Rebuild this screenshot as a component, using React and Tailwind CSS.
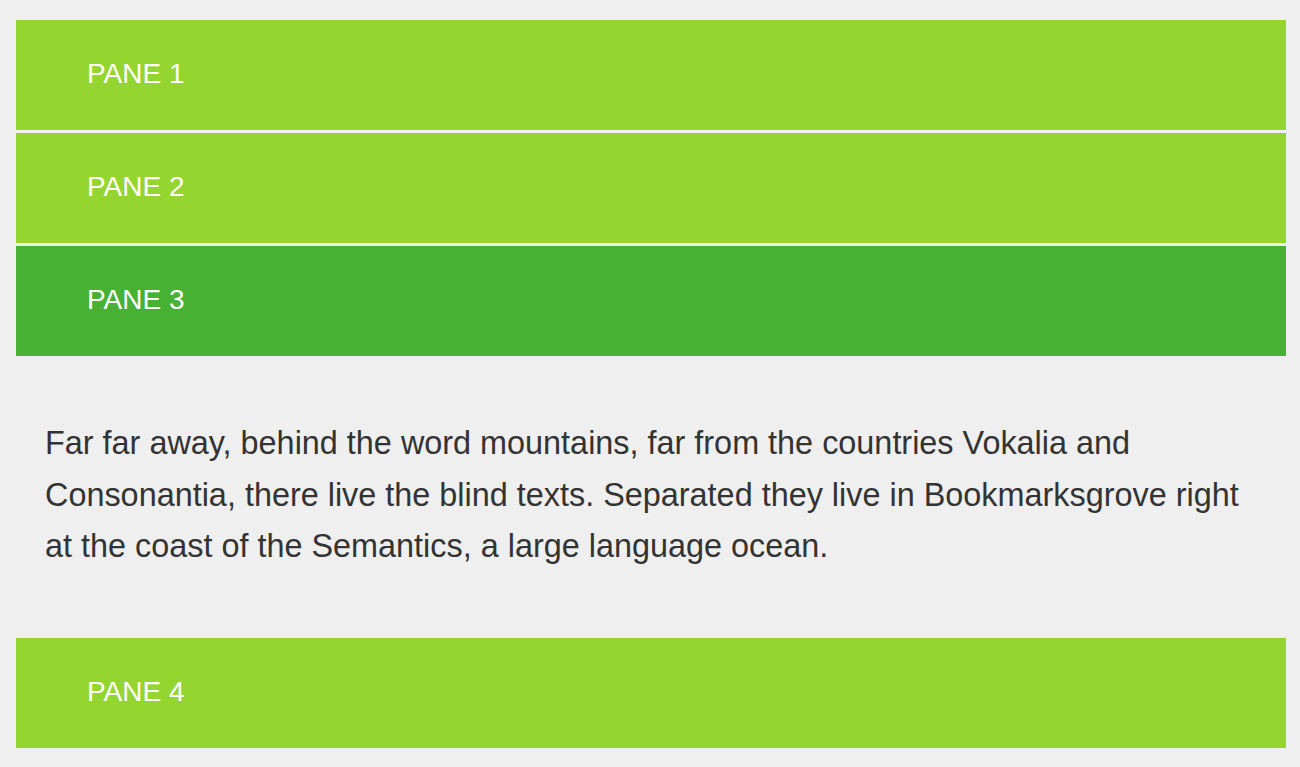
export default function App() {
  const font = { fontFamily: '"Liberation Sans", Arial, Helvetica, sans-serif' };
  const Pane = ({ label, active }) => (
    <div
      className={`h-[110px] flex items-center pl-[71px] pb-[2px] text-white text-[28px] ${
        active ? "bg-[#46b133]" : "bg-[#95d52f]"
      }`}
    >
      {label}
    </div>
  );
  return (
    <div className="min-h-[767px] w-full bg-[#efefef] pt-5 pl-4 pr-[14px]" style={font}>
      <div className="flex flex-col gap-[3px]">
        <Pane label="PANE 1" />
        <Pane label="PANE 2" />
        <div>
          <Pane label="PANE 3" active />
          <div className="pt-[62px] pb-[62px] pl-[29px] pr-[30px] text-[32.4px] leading-[51.5px] text-[#333333]">
            Far far away, behind the word mountains, far from the countries Vokalia and Consonantia, there live the blind texts. Separated they live in Bookmarksgrove right at the coast of the Semantics, a large language ocean.
          </div>
        </div>
        <Pane label="PANE 4" />
      </div>
    </div>
  );
}
